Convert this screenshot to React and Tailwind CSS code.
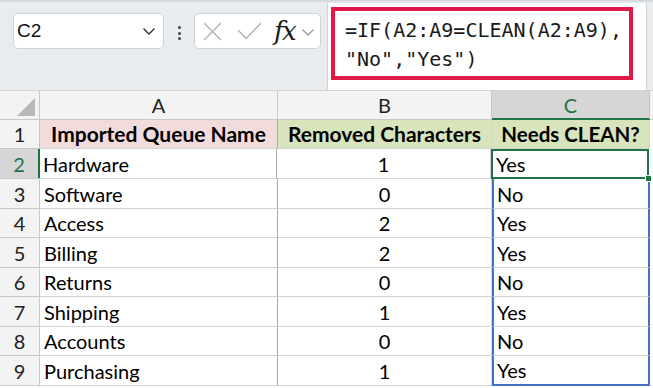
import React from "react";

const rows = [
  ["Hardware", "1", "Yes"],
  ["Software", "0", "No"],
  ["Access", "2", "Yes"],
  ["Billing", "2", "Yes"],
  ["Returns", "0", "No"],
  ["Shipping", "1", "Yes"],
  ["Accounts", "0", "No"],
  ["Purchasing", "1", "Yes"],
];

const rowH = ["h-[30px]", "h-[30px]", "h-[29px]", "h-[30px]", "h-[29px]", "h-[30px]", "h-[29px]", "h-[30px]"];

function TopBar() {
  return (
    <div className="relative flex h-[91px] border-b border-[#d4d4d4] bg-[#e9ecef]">
      <div className="absolute left-0 right-0 top-0 h-[3px] bg-gradient-to-b from-[#cfd3d8] to-[#e9ecef]" />
      <div className="ml-[13px] mt-[13px] flex h-[36px] w-[151px] items-center justify-between rounded-[5px] border border-[#d2d2d2] bg-white pl-[3px] pr-[7px]">
        <span className="text-[19px] text-[#111] [font-family:'Liberation_Sans',sans-serif]">C2</span>
        <svg width="14" height="9" viewBox="0 0 14 9" fill="none">
          <path d="M1.5 1.5 L7 7 L12.5 1.5" stroke="#333" strokeWidth="1.4" />
        </svg>
      </div>
      <div className="ml-[13px] mt-[26px] flex h-[14px] w-[4px] flex-col items-center justify-between">
        <div className="h-[3px] w-[3px] rounded-full bg-[#444]" />
        <div className="h-[3px] w-[3px] rounded-full bg-[#444]" />
        <div className="h-[3px] w-[3px] rounded-full bg-[#444]" />
      </div>
      <div className="ml-[13px] mt-[13px] flex h-[36px] w-[127px] items-center rounded-[5px] border border-[#d2d2d2] bg-white pl-[8px]">
        <svg width="19" height="19" viewBox="0 0 19 19" fill="none">
          <path d="M1 1 L18 18 M18 1 L1 18" stroke="#b3b3b3" strokeWidth="1.4" />
        </svg>
        <svg className="ml-[15px]" width="25" height="18" viewBox="0 0 25 18" fill="none">
          <path d="M1 8 L9 16.5 L24 1" stroke="#b3b3b3" strokeWidth="1.4" />
        </svg>
        <span className="ml-[12px] text-[26px] italic leading-none text-[#1a1a1a] [font-family:'DejaVu_Serif',serif] tracking-[-1.5px]">fx</span>
        <svg className="ml-[6px] mt-[2px]" width="14" height="9" viewBox="0 0 14 9" fill="none">
          <path d="M1.5 1.5 L7 7 L12.5 1.5" stroke="#9a9a9a" strokeWidth="1.3" />
        </svg>
      </div>
      <div className="ml-[6px] h-[90px] w-[320px] border-l border-r border-[#d4d4d4] bg-white pl-[3px] pt-[7px]">
        <div className="h-[73px] w-[302px] border-[4px] border-[#e0184a] pl-[10px] pt-[5px] text-[20px] leading-[29px] text-[#1a1a1a] [font-family:'DejaVu_Sans_Mono',monospace]">
          <div className="whitespace-pre">=IF(A2:A9=CLEAN(A2:A9),</div>
          <div className="whitespace-pre">"No","Yes")</div>
        </div>
      </div>
    </div>
  );
}

function Grid() {
  return (
    <div className="text-[20px] text-black [font-family:Lato,sans-serif]">
      {/* column header row */}
      <div className="flex h-[29px]">
        <div className="relative h-[29px] w-[40px] border-b border-r border-[#c8c8c8] bg-[#f3f3f3]">
          <svg className="absolute bottom-[3px] right-[4px]" width="18" height="18" viewBox="0 0 18 18">
            <path d="M18 0 L18 18 L0 18 Z" fill="#b8b8b8" />
          </svg>
        </div>
        <div className="flex h-[29px] w-[238px] items-center justify-center border-b border-r border-[#c8c8c8] bg-[#f3f3f3] text-[#222]">A</div>
        <div className="flex h-[29px] w-[214px] items-center justify-center border-b border-r border-[#c8c8c8] bg-[#f3f3f3] text-[#222]">B</div>
        <div className="flex h-[29px] w-[158px] items-center justify-center border-b-2 border-r border-b-[#217346] border-r-[#c8c8c8] bg-[#d6d6d6] text-[#217346]">C</div>
        <div className="h-[29px] w-[3px] border-b border-[#c8c8c8] bg-[#f3f3f3]" />
      </div>
      {/* row 1 */}
      <div className="flex h-[29px]">
        <div className="flex h-[29px] w-[40px] items-center justify-center border-b border-r border-[#c8c8c8] bg-[#f3f3f3] text-[#222]">1</div>
        <div className="flex h-[29px] w-[238px] items-center justify-center border-b border-r border-b-[#d4d4d4] border-r-[#a8a8a8] bg-[#f2dcdb] text-[21px] font-bold">Imported Queue Name</div>
        <div className="flex h-[29px] w-[214px] items-center justify-center border-b border-r border-b-[#d4d4d4] border-r-[#d4d4d4] bg-[#d8e4bc] text-[21px] font-bold">Removed Characters</div>
        <div className="flex h-[29px] w-[158px] items-center justify-center border-b border-r border-b-[#d4d4d4] border-r-[#d4d4d4] bg-[#d8e4bc] text-[20.5px] font-bold">Needs CLEAN?</div>
        <div className="h-[29px] w-[3px] bg-white" />
      </div>
      {rows.map((r, i) => {
        const sel = i === 0;
        const last = i === rows.length - 1;
        return (
          <div key={i} className={`flex ${rowH[i]}`}>
            <div
              className={`flex w-[40px] items-center justify-center border-b border-[#c8c8c8] ${
                sel ? "border-r-2 border-r-[#217346] bg-[#d6d6d6] text-[#217346]" : "border-r border-r-[#c8c8c8] bg-[#f3f3f3] text-[#222]"
              }`}
            >
              {i + 2}
            </div>
            <div className={`flex w-[238px] items-center border-b border-r border-b-[#d4d4d4] border-r-[#a8a8a8] pl-[4px] ${sel ? "-ml-px" : ""}`}>{r[0]}</div>
            <div className="flex w-[214px] items-center justify-center border-b border-r border-[#d4d4d4]">{r[1]}</div>
            {sel ? (
              <div className="relative flex w-[158px] items-center border-2 border-[#217346] pl-[3px]">
                {r[2]}
                <div className="absolute -bottom-[5px] -right-[5px] h-[7px] w-[7px] border border-white bg-[#217346]" />
              </div>
            ) : (
              <div className={`flex w-[158px] items-center border-l-2 border-r-2 border-[#4472c4] pl-[3px] ${last ? "border-b-2" : "border-b border-b-[#d4d4d4]"}`}>
                {r[2]}
              </div>
            )}
            <div className="w-[3px] bg-white" />
          </div>
        );
      })}
    </div>
  );
}

export default function App() {
  return (
    <div className="h-[388px] w-[653px] overflow-hidden bg-white">
      <TopBar />
      <Grid />
    </div>
  );
}
